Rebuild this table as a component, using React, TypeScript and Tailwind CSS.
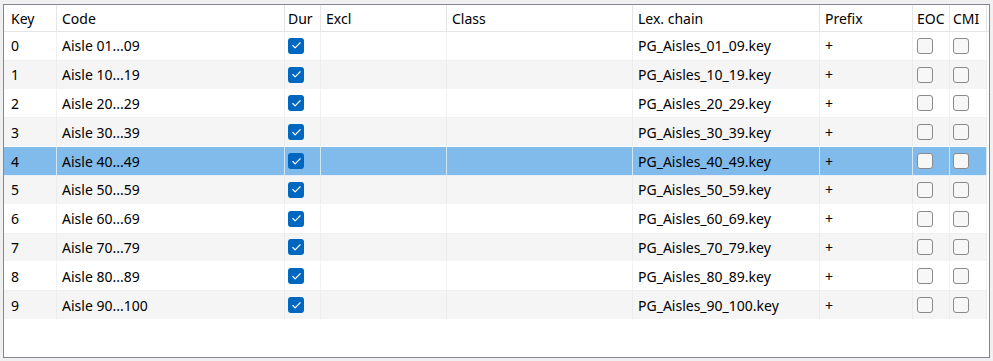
import { Check } from 'lucide-react'

type Row = { key: number; code: string; chain: string }

const rows: Row[] = [
	{ key: 0, code: 'Aisle 01...09', chain: 'PG_Aisles_01_09.key' },
	{ key: 1, code: 'Aisle 10...19', chain: 'PG_Aisles_10_19.key' },
	{ key: 2, code: 'Aisle 20...29', chain: 'PG_Aisles_20_29.key' },
	{ key: 3, code: 'Aisle 30...39', chain: 'PG_Aisles_30_39.key' },
	{ key: 4, code: 'Aisle 40...49', chain: 'PG_Aisles_40_49.key' },
	{ key: 5, code: 'Aisle 50...59', chain: 'PG_Aisles_50_59.key' },
	{ key: 6, code: 'Aisle 60...69', chain: 'PG_Aisles_60_69.key' },
	{ key: 7, code: 'Aisle 70...79', chain: 'PG_Aisles_70_79.key' },
	{ key: 8, code: 'Aisle 80...89', chain: 'PG_Aisles_80_89.key' },
	{ key: 9, code: 'Aisle 90...100', chain: 'PG_Aisles_90_100.key' },
]

const SELECTED = 4

// column widths include the 1px grid line on the right
const cols = {
	key: 'w-[53px] pl-[7px]',
	code: 'w-[228px] pl-[5px]',
	dur: 'w-[36px] pl-[3px]',
	excl: 'w-[126px] pl-[5px]',
	cls: 'w-[186px] pl-[5px]',
	lex: 'w-[187px] pl-[5px]',
	prefix: 'w-[93px] pl-[5px]',
	eoc: 'w-[37px] pl-[4px]',
	cmi: 'w-[37px] pl-[3px]',
}

function Box({ checked }: { checked: boolean }) {
	if (checked)
		return (
			<span className="flex h-4 w-4 items-center justify-center rounded-[3px] bg-[#0067c0]">
				<Check className="h-[11px] w-[11px] text-white" strokeWidth={2.5} />
			</span>
		)
	return (
		<span className="block h-4 w-4 rounded-[3px] border border-[#8a8a8a] bg-[#f7f7f7]" />
	)
}

function Cell({
	className,
	line,
	children,
}: {
	className: string
	line: string
	children?: React.ReactNode
}) {
	return (
		<div
			className={`flex h-full shrink-0 items-center overflow-hidden whitespace-nowrap border-r ${line} ${className}`}
		>
			{children}
		</div>
	)
}

export default function App() {
	return (
		<div className="h-[361px] w-[993px] bg-[#f0f0f0] pl-[3px] pt-[4px] font-['Noto_Sans',sans-serif] text-[14px] text-black">
			<div className="h-[354px] w-[987px] overflow-hidden border border-[#828790] bg-white">
				<div className="flex h-[27px] border-b border-[#e5e5e5]">
					<Cell className={cols.key} line="border-[#e5e5e5]">Key</Cell>
					<Cell className={cols.code} line="border-[#e5e5e5]">Code</Cell>
					<Cell className={cols.dur} line="border-[#e5e5e5]">Dur</Cell>
					<Cell className={cols.excl} line="border-[#e5e5e5]">Excl</Cell>
					<Cell className={cols.cls} line="border-[#e5e5e5]">Class</Cell>
					<Cell className={cols.lex} line="border-[#e5e5e5]">Lex. chain</Cell>
					<Cell className={cols.prefix} line="border-[#e5e5e5]">Prefix</Cell>
					<Cell className={cols.eoc} line="border-[#e5e5e5]">EOC</Cell>
					<Cell className={cols.cmi} line="border-[#e5e5e5]">CMI</Cell>
				</div>

				{rows.map((r, i) => {
					const selected = i === SELECTED
					const bg = selected
						? 'bg-[#80bbeb] border-[#e6f0fa]'
						: i % 2
							? 'bg-[#f5f5f5] border-[#ffffff]'
							: 'bg-white border-[#f0f0f0]'
					const line = selected
						? 'border-[#d4e7f8]'
						: i % 2
							? 'border-[#ebebeb]'
							: 'border-[#f0f0f0]'
					return (
						<div key={r.key} className={`flex h-[28.8px] w-[983px] border-b ${bg}`}>
							<Cell className={cols.key} line={line}>{r.key}</Cell>
							<Cell className={cols.code} line={line}>{r.code}</Cell>
							<Cell className={cols.dur} line={line}>
								<Box checked />
							</Cell>
							<Cell className={cols.excl} line={line} />
							<Cell className={cols.cls} line={line} />
							<Cell className={cols.lex} line={line}>{r.chain}</Cell>
							<Cell className={cols.prefix} line={line}>+</Cell>
							<Cell className={cols.eoc} line={line}>
								<Box checked={false} />
							</Cell>
							<Cell className={cols.cmi} line={line}>
								<Box checked={false} />
							</Cell>
						</div>
					)
				})}
			</div>
		</div>
	)
}
